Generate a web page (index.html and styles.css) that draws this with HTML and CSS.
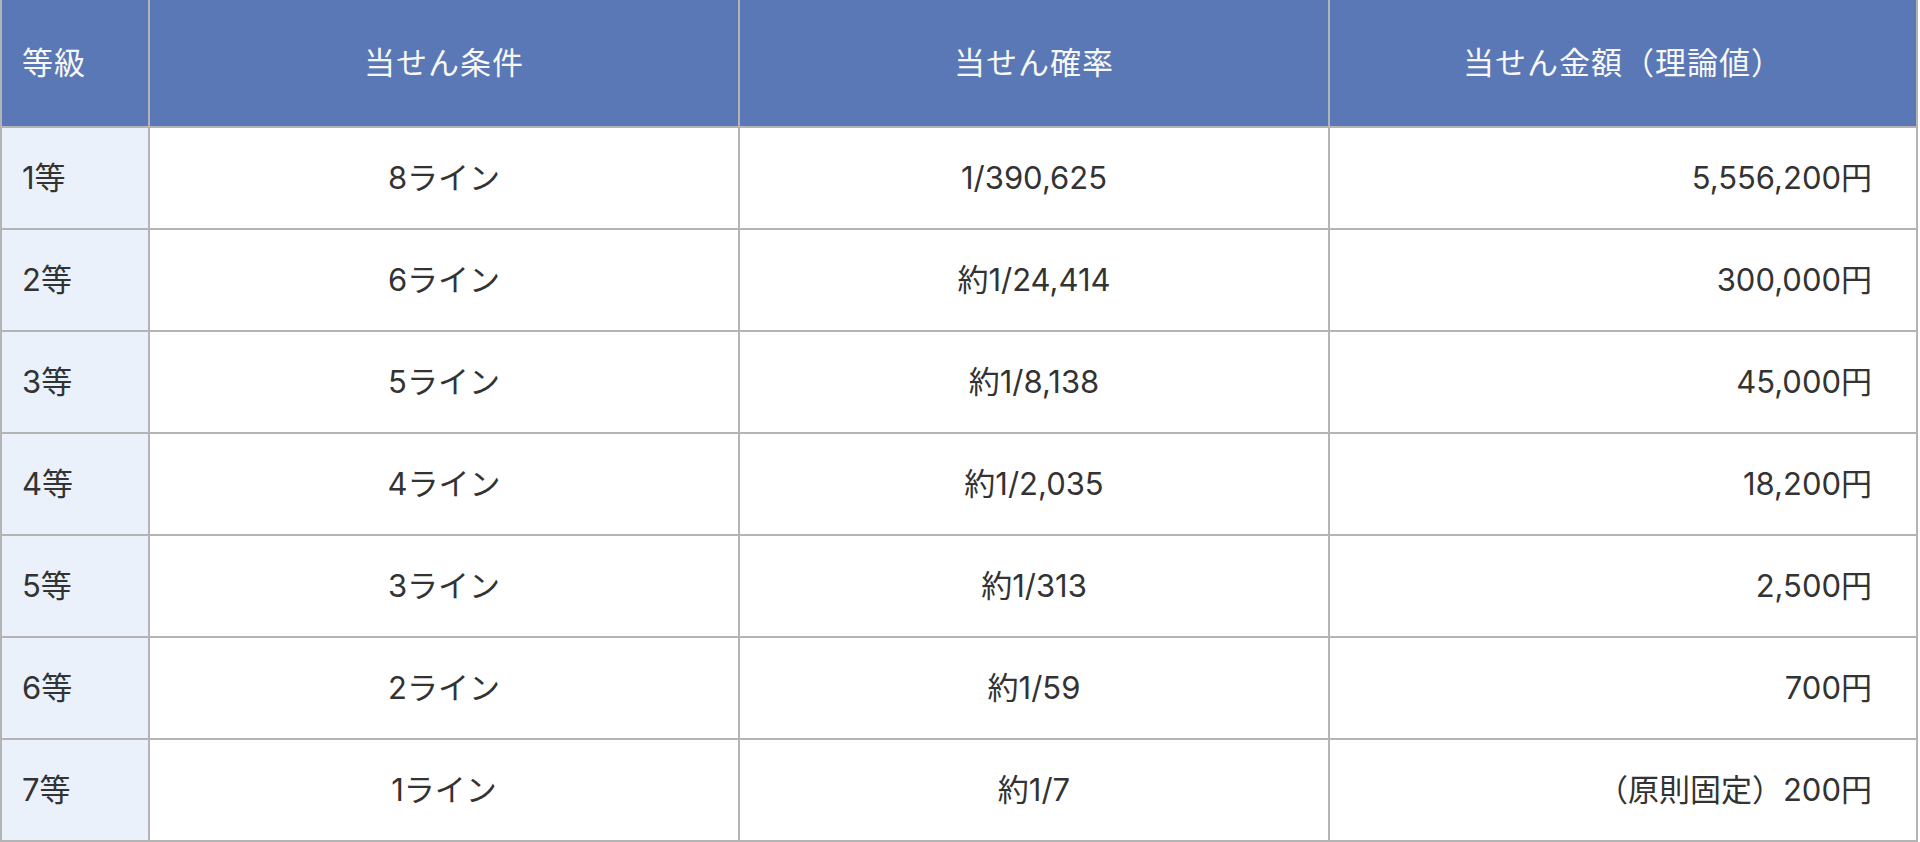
FILE: index.html
```html
<!DOCTYPE html>
<html lang="ja">
<head>
<meta charset="utf-8">
<title>当せん条件</title>
<link rel="stylesheet" href="styles.css">
</head>
<body>
<table class="prize-table">
  <thead>
    <tr>
      <th class="col-grade">等級</th>
      <th class="col-cond">当せん条件</th>
      <th class="col-prob">当せん確率</th>
      <th class="col-amount">当せん金額（理論値）</th>
    </tr>
  </thead>
  <tbody>
    <tr><td class="grade">1等</td><td class="center">8ライン</td><td class="center">1/390,625</td><td class="amount">5,556,200円</td></tr>
    <tr><td class="grade">2等</td><td class="center">6ライン</td><td class="center">約1/24,414</td><td class="amount">300,000円</td></tr>
    <tr><td class="grade">3等</td><td class="center">5ライン</td><td class="center">約1/8,138</td><td class="amount">45,000円</td></tr>
    <tr><td class="grade">4等</td><td class="center">4ライン</td><td class="center">約1/2,035</td><td class="amount">18,200円</td></tr>
    <tr><td class="grade">5等</td><td class="center">3ライン</td><td class="center">約1/313</td><td class="amount">2,500円</td></tr>
    <tr><td class="grade">6等</td><td class="center">2ライン</td><td class="center">約1/59</td><td class="amount">700円</td></tr>
    <tr><td class="grade">7等</td><td class="center">1ライン</td><td class="center">約1/7</td><td class="amount">（原則固定）200円</td></tr>
  </tbody>
</table>
</body>
</html>
```

FILE: styles.css
```css
html, body {
  margin: 0;
  padding: 0;
  background: #ffffff;
}

body {
  font-family: Inter, "Noto Sans CJK JP", "Noto Sans", sans-serif;
  color: #333333;
}

.prize-table {
  width: 1918px;
  table-layout: fixed;
  border-collapse: separate;
  border-spacing: 0;
  border-left: 2px solid #b4b4b4;
  box-sizing: border-box;
}

.prize-table th,
.prize-table td {
  box-sizing: border-box;
  border-right: 2px solid #b4b4b4;
  border-bottom: 2px solid #b4b4b4;
  font-size: 31px;
  font-weight: 400;
  line-height: 1.4;
  padding: 0;
  vertical-align: middle;
}

.prize-table th {
  height: 128px;
  background: #5a78b5;
  color: #f7f7f7;
  text-align: center;
  letter-spacing: 1px;
}

.prize-table td {
  height: 102px;
}

.col-grade { width: 148px; }
.col-cond { width: 590px; }
.col-prob { width: 590px; }
.col-amount { width: 588px; }

.prize-table th.col-grade {
  text-align: left;
  padding-left: 20px;
}

.grade {
  background: #eaf1fb;
  padding-left: 20px !important;
  text-align: left;
}

.center {
  text-align: center;
}

.amount {
  text-align: right;
  padding-right: 44px !important;
}
```
